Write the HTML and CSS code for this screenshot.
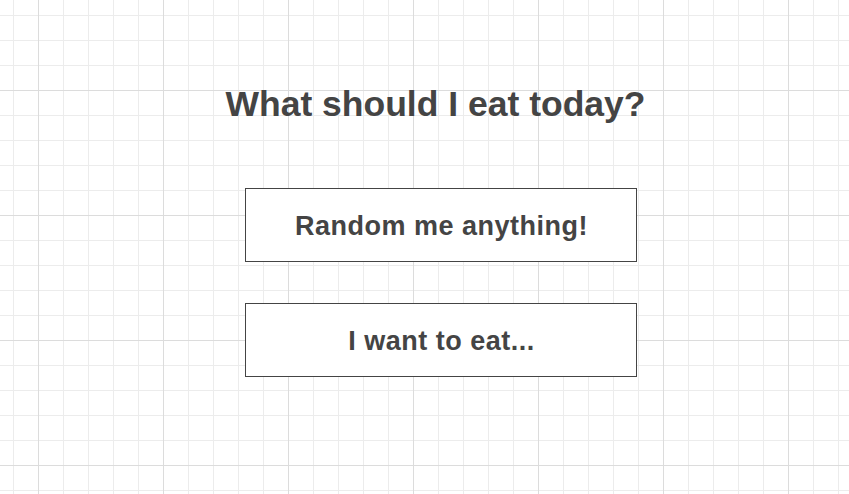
FILE: index.html
```html
<!DOCTYPE html>
<html>
<head>
<meta charset="utf-8">
<link rel="stylesheet" href="styles.css">
</head>
<body>
<main class="page">
  <h1 class="title">What should I eat today?</h1>
  <div class="actions">
    <button class="choice">Random me anything!</button>
    <button class="choice">I want to eat...</button>
  </div>
</main>
</body>
</html>
```
FILE: styles.css
```css
html, body {
  margin: 0;
  padding: 0;
  height: 100%;
}
body {
  background-color: #fff;
  background-image:
    linear-gradient(to right, #dcdcdc 1px, transparent 1px),
    linear-gradient(to bottom, #dcdcdc 1px, transparent 1px),
    linear-gradient(to right, #ececec 1px, transparent 1px),
    linear-gradient(to bottom, #ececec 1px, transparent 1px);
  background-size: 125px 125px, 125px 125px, 25px 25px, 25px 25px;
  background-position: 38px 0, 0 90px, 13px 0, 0 15px;
  font-family: "Liberation Sans", Arial, sans-serif;
  color: #444;
}
.page {
  display: flex;
  flex-direction: column;
  align-items: center;
  padding-top: 84px;
}
.title {
  margin: 0 0 0 22px;
  font-size: 35.5px;
  font-weight: bold;
  line-height: 40px;
}
.actions {
  display: flex;
  flex-direction: column;
  gap: 41px;
  margin: 64px 0 0 33px;
}
.choice {
  width: 392px;
  height: 74px;
  border: 1px solid #444;
  background: #fff;
  font-family: "Liberation Sans", Arial, sans-serif;
  font-size: 27px;
  letter-spacing: 0.5px;
  font-weight: bold;
  color: #444;
  padding: 2px 0 0 1px;
  cursor: pointer;
}
```
